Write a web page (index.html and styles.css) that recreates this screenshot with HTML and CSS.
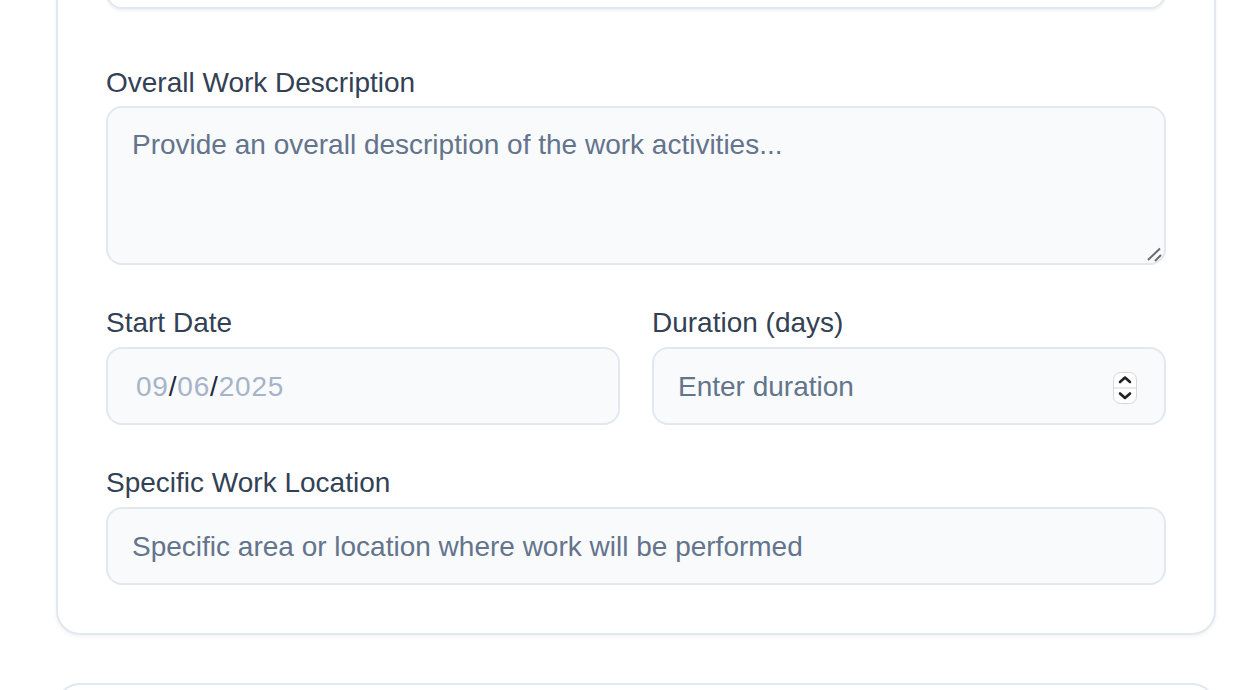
FILE: index.html
```html
<!DOCTYPE html>
<html lang="en">
<head>
<meta charset="utf-8">
<title>Work Details</title>
<link rel="stylesheet" href="styles.css">
</head>
<body>
<main class="page">
  <section class="card">
    <div class="top-field"></div>

    <div class="group first">
      <label class="label" for="desc">Overall Work Description</label>
      <div class="area-wrap">
        <textarea id="desc" class="textarea" placeholder="Provide an overall description of the work activities..."></textarea>
        <svg class="resize" width="16" height="16" viewBox="0 0 16 16">
          <line x1="2" y1="14" x2="14" y2="2.5" stroke="#6b6b6b" stroke-width="2"/>
          <line x1="9" y1="15" x2="15" y2="9" stroke="#6b6b6b" stroke-width="2"/>
        </svg>
      </div>
    </div>

    <div class="row">
      <div class="group">
        <label class="label">Start Date</label>
        <div class="input date"><span class="seg">09</span><span class="sep">/</span><span class="seg">06</span><span class="sep">/</span><span class="seg">2025</span></div>
      </div>
      <div class="group">
        <label class="label" for="dur">Duration (days)</label>
        <div class="num-wrap">
          <input id="dur" class="input" type="text" placeholder="Enter duration">
          <svg class="spinner" width="26" height="34" viewBox="0 0 26 34">
            <rect x="1.5" y="1.5" width="23" height="31" rx="7" fill="#ffffff" stroke="#d4d7dc" stroke-width="1"/>
            <line x1="1.5" y1="17" x2="24.5" y2="17" stroke="#d4d7dc" stroke-width="1"/>
            <path d="M8 11 L13 6.5 L18 11" fill="none" stroke="#222" stroke-width="2.6" stroke-linecap="round" stroke-linejoin="round"/>
            <path d="M8 22.5 L13 27 L18 22.5" fill="none" stroke="#222" stroke-width="2.6" stroke-linecap="round" stroke-linejoin="round"/>
          </svg>
        </div>
      </div>
    </div>

    <div class="group">
      <label class="label" for="loc">Specific Work Location</label>
      <input id="loc" class="input" type="text" placeholder="Specific area or location where work will be performed">
    </div>
  </section>

  <section class="card next"></section>
</main>
</body>
</html>
```

FILE: styles.css
```css
* { box-sizing: border-box; }

html, body {
  margin: 0;
  padding: 0;
  background: #ffffff;
  overflow: hidden;
}

body {
  font-family: "Liberation Sans", Arial, Helvetica, sans-serif;
  color: #334155;
}

.page {
  padding-left: 56px;
  width: 1216px;
}

.card {
  background: #ffffff;
  border: 2px solid #e2e8f0;
  border-radius: 24px;
  box-shadow: 0 2px 4px rgba(15, 23, 42, 0.05);
  padding: 48px;
  margin-top: -119px;
  display: flex;
  flex-direction: column;
}

.card.next {
  margin-top: 48px;
  height: 200px;
}

.top-field {
  height: 78px;
  background: #ffffff;
  border: 2px solid #e2e8f0;
  border-radius: 16px;
  box-shadow: 0 2px 3px rgba(15, 23, 42, 0.06);
}

.group {
  display: flex;
  flex-direction: column;
  margin-top: 37px;
  min-width: 0;
}

.group.first {
  margin-top: 53px;
}

.row {
  display: grid;
  grid-template-columns: 1fr 1fr;
  column-gap: 32px;
}

.label {
  display: block;
  font-size: 28px;
  line-height: 40px;
  padding-top: 1px;
  color: #334155;
  margin-bottom: 4px;
}

.group.first .label {
  margin-bottom: 3px;
}

.area-wrap, .num-wrap {
  position: relative;
}

.textarea {
  display: block;
  width: 100%;
  height: 159px;
  resize: none;
  font-family: inherit;
  font-size: 28px;
  line-height: 40px;
  color: #334155;
  background: #f8fafc;
  border: 2px solid #e2e8f0;
  border-radius: 16px;
  padding: 17px 24px 15px;
  outline: none;
  margin: 0;
}

.input {
  display: flex;
  align-items: center;
  width: 100%;
  height: 78px;
  font-family: inherit;
  font-size: 28px;
  color: #334155;
  background: #f8fafc;
  border: 2px solid #e2e8f0;
  border-radius: 16px;
  padding: 2px 24px 0;
  outline: none;
  margin: 0;
}

.textarea::placeholder, .input::placeholder {
  color: #64748b;
  opacity: 1;
}

.date {
  padding-left: 28px;
  letter-spacing: 0.8px;
}

.seg { color: #a7b4c7; }
.sep { color: #1e293b; font-weight: 300; }

.resize {
  position: absolute;
  right: 4px;
  bottom: 3px;
}

.spinner {
  position: absolute;
  right: 28px;
  top: 24px;
}
```
